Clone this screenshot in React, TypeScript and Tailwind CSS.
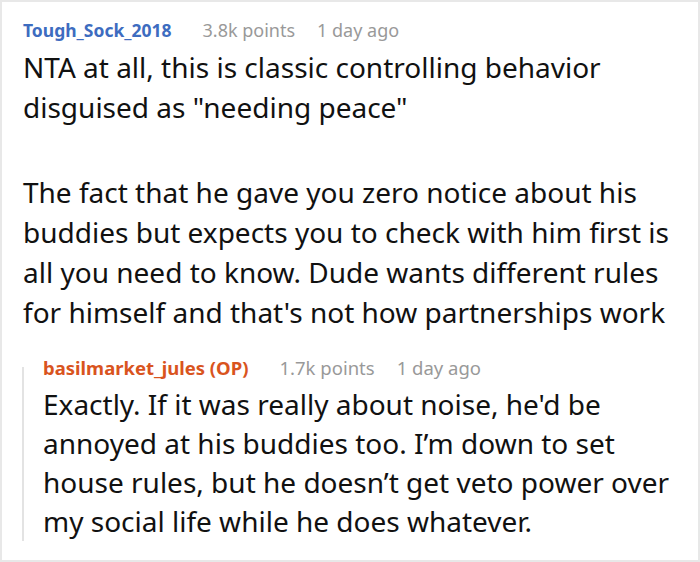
import React from 'react';

interface MetaProps {
  author: string;
  points: string;
  age: string;
  color: string;
  size: string;
  nameSize: string;
}

const Meta: React.FC<MetaProps> = ({ author, points, age, color, size, nameSize }) => (
  <div className={`flex items-baseline leading-[24px] whitespace-nowrap ${size}`}>
    <span className={`font-bold ${nameSize} ${color}`}>{author}</span>
    <span className="ml-[31px] text-[#999999]">{points}</span>
    <span className="ml-[22px] text-[#999999]">{age}</span>
  </div>
);

const App: React.FC = () => {
  return (
    <div className="w-[700px] h-[562px] bg-white border-2 border-[#e8e8e8] overflow-hidden font-['Noto_Sans',sans-serif] text-[#111111]">
      <div className="pl-[21px] pr-2 pt-4">
        <Meta
          author="Tough_Sock_2018"
          points="3.8k points"
          age="1 day ago"
          color="text-[#3d6cc0]"
          size="text-[18px]"
          nameSize="text-[17.5px]"
        />

        {/* Comment body */}
        <div className="mt-[5px] text-[28px] leading-[40px] whitespace-nowrap">
          <p>
            NTA at all, this is classic controlling behavior
            <br />
            disguised as "needing peace"
          </p>
          <p className="mt-[45px]">
            The fact that he gave you zero notice about his
            <br />
            buddies but expects you to check with him first is
            <br />
            all you need to know. Dude wants different rules
            <br />
            for himself and that's not how partnerships work
          </p>
        </div>

        {/* Reply */}
        <div className="mt-[24px] -ml-px flex">
          <div className="mt-[11px] w-[2px] bg-[#e3e3e3] shrink-0" />
          <div className="pl-[19px]">
            <Meta
              author="basilmarket_jules (OP)"
              points="1.7k points"
              age="1 day ago"
              color="text-[#d9541e]"
              size="text-[18.5px]"
              nameSize="text-[18.5px]"
            />
            <p className="mt-[5px] text-[28px] leading-[39px] whitespace-nowrap">
              Exactly. If it was really about noise, he'd be
              <br />
              annoyed at his buddies too. I’m down to set
              <br />
              house rules, but he doesn’t get veto power over
              <br />
              my social life while he does whatever.
            </p>
          </div>
        </div>
      </div>
    </div>
  );
};

export default App;
